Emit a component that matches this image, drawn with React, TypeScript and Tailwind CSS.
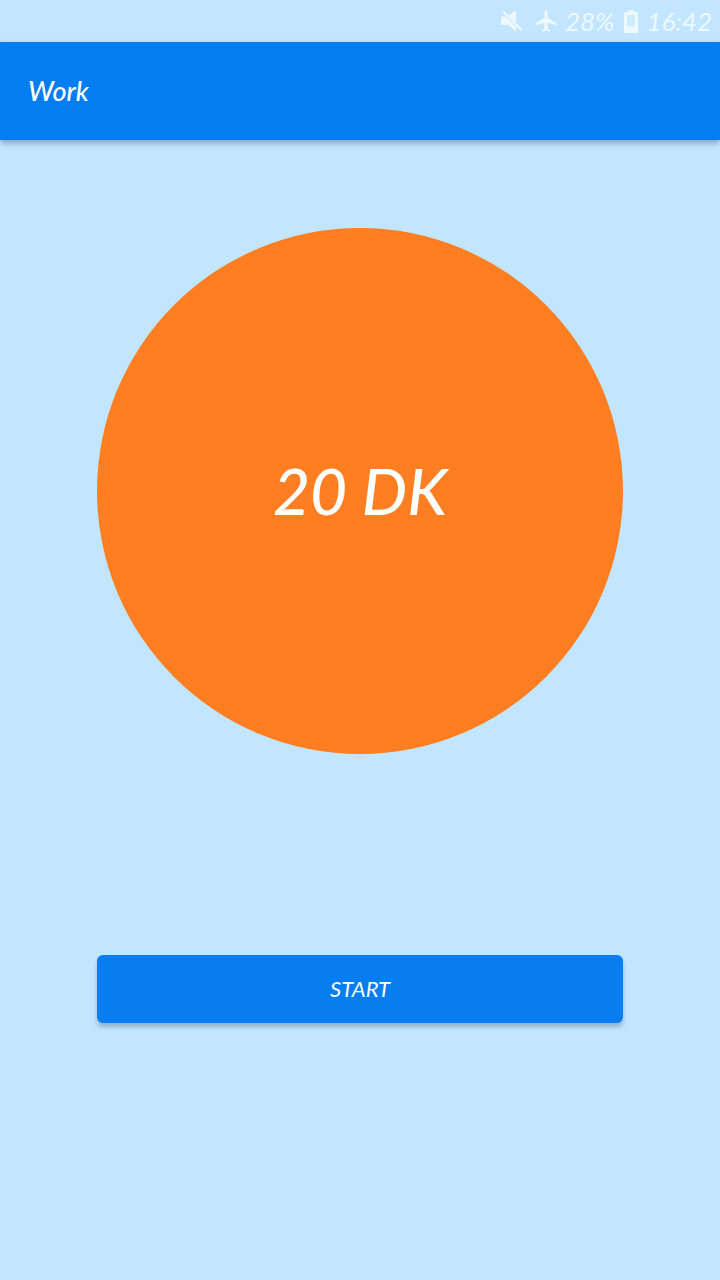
import React, { useState } from 'react';

const MutedIcon = () => (
  <svg width="22" height="24" viewBox="0 0 22 24" fill="currentColor" aria-label="Muted">
    <path d="M0 7.500h4.500L15 18v4.500L7.500 16H0z" />
    <path d="M7.500 6.500L15 1v12.500z" />
    <path d="M1.500 3.500L3 2l18.500 18.500L20 22z" />
  </svg>
);

const AirplaneIcon = () => (
  <svg width="26" height="26" viewBox="0 0 24 24" fill="currentColor" aria-label="Airplane mode">
    <path d="M21.500 16v-2.200L13.500 9V3.500a1.500 1.500 0 0 0-3 0V9l-8 4.800V16l8-2.500V19l-2.200 1.500V22l3.700-1 3.700 1v-1.500L13.500 19v-5.500z" />
  </svg>
);

const BatteryIcon = () => (
  <svg width="14" height="23" viewBox="0 0 14 23" fill="currentColor" aria-label="Battery">
    <path
      fillRule="evenodd"
      d="M4 0h6v2h3a1 1 0 0 1 1 1v19a1 1 0 0 1-1 1H1a1 1 0 0 1-1-1V3a1 1 0 0 1 1-1h3zM3 5v11h8V5z"
    />
    <path d="M3 5h8v11H3z" opacity="0.3" />
  </svg>
);

const StatusBar = () => (
  <div className="flex h-[42px] items-center justify-end pr-2 text-[26px] italic text-[#edf8ff]">
    <MutedIcon />
    <span className="ml-2.5">
      <AirplaneIcon />
    </span>
    <span className="ml-1.5">28%</span>
    <span className="ml-2.5">
      <BatteryIcon />
    </span>
    <span className="ml-2">16:42</span>
  </div>
);

const App = () => {
  const [running, setRunning] = useState(false);

  return (
    <div className="min-h-screen bg-[#c2e6ff] font-[Lato,sans-serif]">
      <StatusBar />

      <header className="flex h-[98px] items-center bg-[#047df1] px-7 shadow-[0_3px_6px_rgba(0,0,0,0.3)]">
        <h1 className="text-[27px] font-medium italic text-white">Work</h1>
      </header>

      <main className="mx-auto flex w-[73%] flex-col items-center pt-[88px] pb-20">
        <div className="flex aspect-square w-full items-center justify-center rounded-full bg-[#ff7e22]">
          <span className="text-[64px] leading-none font-medium italic text-white">20 DK</span>
        </div>

        <button
          type="button"
          aria-pressed={running}
          onClick={() => setRunning(!running)}
          className="mt-[201px] h-[68px] w-full rounded-md bg-[#067eef] text-[22px] italic text-white shadow-[0_4px_4px_rgba(0,0,0,0.22)]"
        >
          START
        </button>
      </main>
    </div>
  );
};

export default App;
